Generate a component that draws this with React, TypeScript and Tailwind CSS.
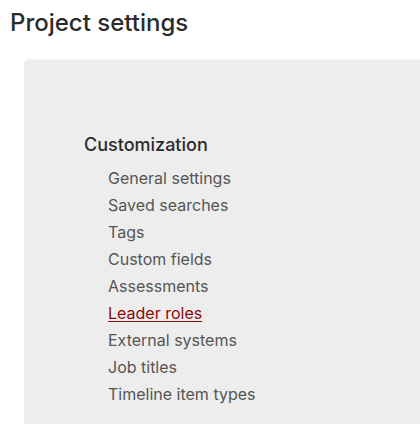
const items = [
  "General settings",
  "Saved searches",
  "Tags",
  "Custom fields",
  "Assessments",
  "Leader roles",
  "External systems",
  "Job titles",
  "Timeline item types",
];

export default function App() {
  return (
    <div className="h-[424px] w-[420px] overflow-hidden bg-white font-['Inter',sans-serif]">
      <h1 className="pl-[10px] pt-[8px] text-[24px] font-medium leading-[30px] text-[#2b2b2b]">
        Project settings
      </h1>
      <div className="ml-[24px] mt-[22px] h-[400px] rounded-tl-[6px] bg-[#ededed] pl-[60px] pt-[73px] shadow-[0_-1px_2px_rgba(0,0,0,0.06)]">
        <h2 className="text-[18px] font-medium leading-[24px] text-[#2b2b2b]">Customization</h2>
        <ul className="mt-[8px] pl-[24px]">
          {items.map((item) => (
            <li key={item} className="text-[16px] leading-[27px]">
              <a
                href="#"
                className={
                  item === "Leader roles"
                    ? "text-[#8b0a0a] underline underline-offset-2"
                    : "text-[#555555]"
                }
              >
                {item}
              </a>
            </li>
          ))}
        </ul>
      </div>
    </div>
  );
}
